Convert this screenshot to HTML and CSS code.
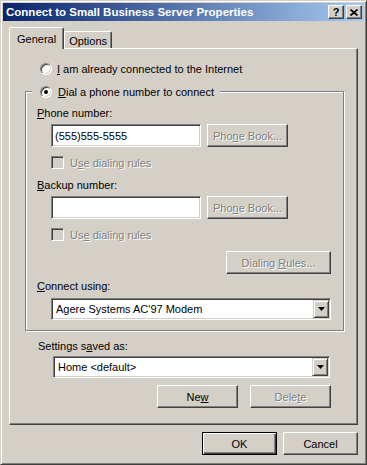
FILE: index.html
```html
<!DOCTYPE html>
<html lang="en">
<head>
  <meta charset="UTF-8" />
  <title>Connect to Small Business Server Properties</title>
  <link rel="stylesheet" href="styles.css">
</head>
<body>
  <div class="window">
    <div class="titlebar">
      <span class="title">Connect to Small Business Server Properties</span>
      <span class="cap-btn">?</span>
      <span class="cap-btn">
        <svg width="8" height="7" viewBox="0 0 8 7"><path d="M0.5 0.5L7.5 6.5M7.5 0.5L0.5 6.5" stroke="#000" stroke-width="1.7" fill="none"/></svg>
      </span>
    </div>

    <div class="dlg-body">
      <div class="tabs">
        <div class="tab active">General</div>
        <div class="tab">Options</div>
      </div>

      <div class="panel">
        <div class="opt first">
          <span class="radio"></span>
          <span><u>I</u> am already connected to the Internet</span>
        </div>

        <fieldset class="group">
          <legend>
            <span class="opt">
              <span class="radio checked"></span>
              <span><u>D</u>ial a phone number to connect</span>
            </span>
          </legend>

          <div class="field-label"><u>P</u>hone number:</div>
          <div class="input-row">
            <div class="textbox">(555)555-5555</div>
            <button class="btn disabled">Pho<u>n</u>e Book...</button>
          </div>
          <div class="check-row disabled">
            <span class="checkbox"></span>
            <span>U<u>s</u>e dialing rules</span>
          </div>

          <div class="field-label gap"><u>B</u>ackup number:</div>
          <div class="input-row">
            <div class="textbox"></div>
            <button class="btn disabled">Pho<u>n</u>e Book...</button>
          </div>
          <div class="check-row disabled">
            <span class="checkbox"></span>
            <span>Us<u>e</u> dialing rules</span>
          </div>

          <div class="right-row">
            <button class="btn wide disabled">Dialing <u>R</u>ules...</button>
          </div>

          <div class="field-label small-gap"><u>C</u>onnect using:</div>
          <div class="combo modem">
            <span class="combo-text">Agere Systems AC'97 Modem</span>
            <span class="drop"><svg width="7" height="4" viewBox="0 0 7 4"><path d="M0 0H7L3.5 4Z" fill="#000"/></svg></span>
          </div>
        </fieldset>

        <div class="field-label saved">Settings s<u>a</u>ved as:</div>
        <div class="combo settings">
          <span class="combo-text">Home &lt;default&gt;</span>
          <span class="drop"><svg width="7" height="4" viewBox="0 0 7 4"><path d="M0 0H7L3.5 4Z" fill="#000"/></svg></span>
        </div>

        <div class="right-row profile-btns">
          <button class="btn">Ne<u>w</u></button>
          <button class="btn disabled">Dele<u>t</u>e</button>
        </div>
      </div>

      <div class="dlg-buttons">
        <button class="btn default">OK</button>
        <button class="btn">Cancel</button>
      </div>
    </div>
  </div>
</body>
</html>
```

FILE: styles.css
```css
body {
  margin: 0;
  font-family: "Liberation Sans", Arial, sans-serif;
  font-size: 11px;
  color: #000;
  background: #d4d0c8;
}

.window {
  width: 367px;
  height: 465px;
  box-sizing: border-box;
  border: 1px solid;
  border-color: #d4d0c8 #404040 #404040 #d4d0c8;
  box-shadow: inset 1px 1px #fff, inset -1px -1px #808080;
  padding: 2px;
  display: flex;
  flex-direction: column;
  background: #d4d0c8;
}

/* title bar */
.titlebar {
  height: 18px;
  display: flex;
  align-items: center;
  padding: 0 2px 0 2px;
  background: linear-gradient(to right, #0a246a, #a6caf0);
}

.title {
  flex: 1;
  color: #fff;
  font-weight: bold;
  font-size: 11.5px;
  padding-left: 1px;
}

.cap-btn {
  width: 16px;
  height: 14px;
  box-sizing: border-box;
  margin-left: 2px;
  background: #d4d0c8;
  border: 1px solid;
  border-color: #fff #404040 #404040 #fff;
  box-shadow: inset -1px -1px #808080;
  display: flex;
  align-items: center;
  justify-content: center;
  font-weight: bold;
  font-size: 11px;
  line-height: 1;
}

.dlg-body {
  flex: 1;
  display: flex;
  flex-direction: column;
  padding: 6px 6px 0 6px;
}

/* tabs */
.tabs {
  display: flex;
  align-items: flex-end;
  height: 21px;
}

.tab {
  height: 17px;
  box-sizing: border-box;
  padding: 2px 4px 0 4px;
  border-left: 1px solid #fff;
  border-top: 1px solid #fff;
  border-right: 1px solid #404040;
  box-shadow: inset -1px 0 #808080;
  border-radius: 2px 2px 0 0;
  display: flex;
  align-items: center;
}

.tab.active {
  height: 22px;
  padding: 0 7px;
  margin-bottom: -1px;
  position: relative;
  z-index: 1;
  background: #d4d0c8;
}

.panel {
  height: 377px;
  box-sizing: border-box;
  border: 1px solid;
  border-color: #fff #404040 #404040 #fff;
  box-shadow: inset -1px -1px #808080;
  display: flex;
  flex-direction: column;
}

/* radio / check */
.opt {
  display: flex;
  align-items: center;
  gap: 5px;
  height: 13px;
}

.opt.first {
  margin: 13px 0 0 30px;
}

.radio {
  flex: none;
  width: 12px;
  height: 12px;
  box-sizing: border-box;
  border-radius: 50%;
  background: #fff;
  border: 1px solid;
  border-color: #808080 #fff #fff #808080;
  box-shadow: inset 1px 1px #404040, inset -1px -1px #d4d0c8;
  display: flex;
  align-items: center;
  justify-content: center;
}

.radio.checked::after {
  content: "";
  width: 4px;
  height: 4px;
  border-radius: 50%;
  background: #000;
}

.group {
  margin: 10px 13px 0 15px;
  padding: 9px 12px 10px 11px;
  border: 1px solid #808080;
  box-shadow: inset 1px 1px #fff, 1px 1px #fff;
  min-width: 0;
}

.group legend {
  margin-left: -5px;
  padding: 0 6px 0 8px;
  background: #d4d0c8;
}

.group legend .opt {
  gap: 6px;
}

.field-label {
  line-height: 13px;
  height: 13px;
}

.field-label.gap {
  margin-top: 10px;
}

.field-label.small-gap {
  margin-top: 6px;
}

.field-label.saved {
  margin: 9px 0 0 28px;
}

.input-row {
  display: flex;
  gap: 6px;
  margin: 4px 0 0 14px;
}

.textbox {
  width: 150px;
  height: 23px;
  box-sizing: border-box;
  background: #fff;
  border: 1px solid;
  border-color: #808080 #fff #fff #808080;
  box-shadow: inset 1px 1px #404040, inset -1px -1px #d4d0c8;
  padding-left: 3px;
  display: flex;
  align-items: center;
}

.check-row {
  display: flex;
  align-items: center;
  gap: 6px;
  height: 13px;
  margin: 9px 0 0 14px;
}

.checkbox {
  width: 13px;
  height: 13px;
  box-sizing: border-box;
  background: #d4d0c8;
  border: 1px solid;
  border-color: #808080 #fff #fff #808080;
  box-shadow: inset 1px 1px #404040, inset -1px -1px #d4d0c8;
}

.right-row {
  display: flex;
  justify-content: flex-end;
  margin-top: 10px;
}

/* buttons */
.btn {
  width: 81px;
  height: 23px;
  box-sizing: border-box;
  padding: 0;
  font: inherit;
  color: #000;
  background: #d4d0c8;
  border: 1px solid;
  border-color: #fff #404040 #404040 #fff;
  box-shadow: inset -1px -1px #808080;
}

.btn.wide {
  width: 105px;
}

.disabled {
  color: #808080;
  text-shadow: 1px 1px #fff;
}

.btn.default {
  border: 1px solid #000;
  box-shadow: inset 1px 1px #fff, inset -1px -1px #404040, inset -2px -2px #808080;
}

/* combo boxes */
.combo {
  height: 22px;
  box-sizing: border-box;
  background: #fff;
  border: 1px solid;
  border-color: #808080 #fff #fff #808080;
  box-shadow: inset 1px 1px #404040, inset -1px -1px #d4d0c8;
  padding: 1px;
  display: flex;
  align-items: center;
}

.combo.modem {
  margin: 5px 0 0 14px;
}

.combo.settings {
  margin: 3px 27px 0 43px;
}

.combo-text {
  flex: 1;
  padding-left: 3px;
}

.drop {
  width: 16px;
  height: 18px;
  box-sizing: border-box;
  background: #d4d0c8;
  border: 1px solid;
  border-color: #d4d0c8 #404040 #404040 #d4d0c8;
  box-shadow: inset 1px 1px #fff, inset -1px -1px #808080;
  display: flex;
  align-items: center;
  justify-content: center;
}

.profile-btns {
  gap: 12px;
  margin: 7px 26px 0 0;
}

.dlg-buttons {
  display: flex;
  justify-content: flex-end;
  gap: 6px;
  margin-top: 7px;
}

.dlg-buttons .btn {
  width: 75px;
}
```
